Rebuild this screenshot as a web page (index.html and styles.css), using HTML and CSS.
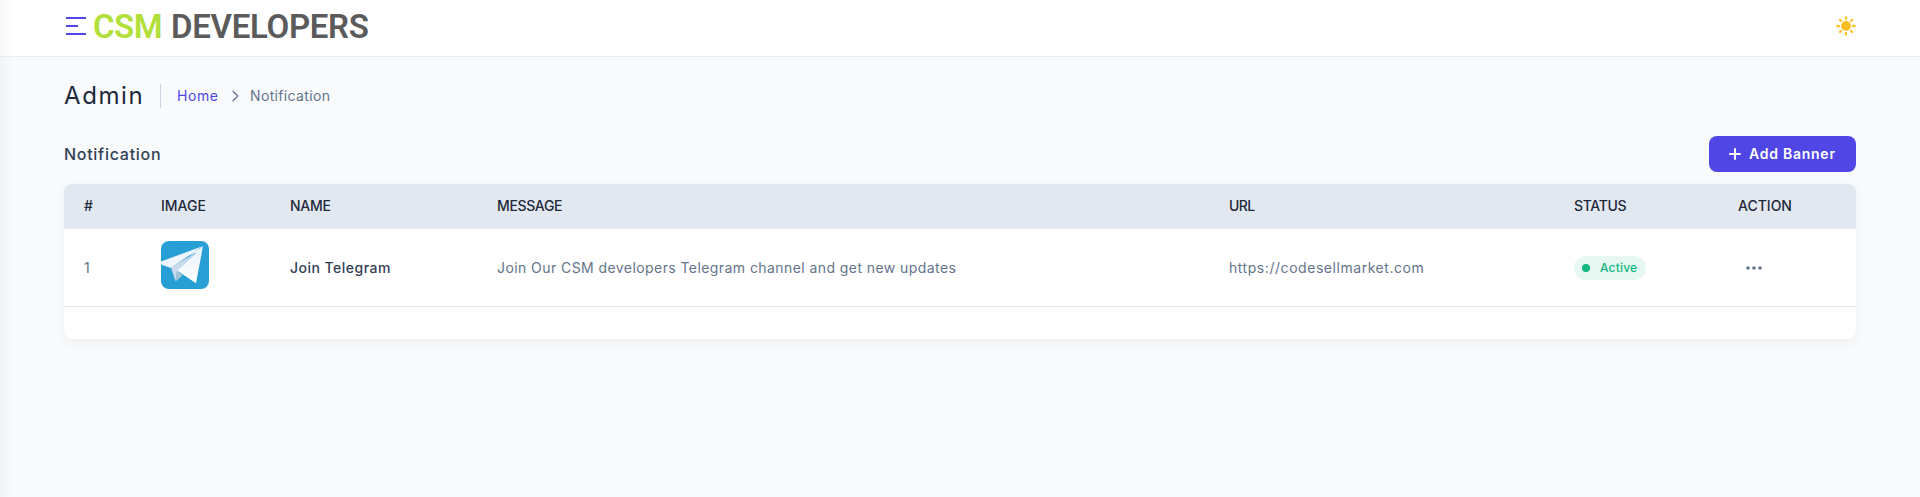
FILE: index.html
```html
<!DOCTYPE html>
<html lang="en">
<head>
<meta charset="utf-8">
<title>Notification</title>
<link rel="stylesheet" href="styles.css">
</head>
<body>
<div class="edge-shadow"></div>
<header class="topbar">
  <div class="brand">
    <div class="menu"><i></i><i class="short"></i><i></i></div>
    <div class="logo"><span class="lime">CSM</span> DEVELOPERS</div>
  </div>
  <svg class="sun" viewBox="0 0 20 20" fill="none" stroke="#fbbf24" stroke-width="2.3" stroke-linecap="round"><circle cx="10" cy="10" r="5" fill="#fbbf24" stroke="none"/><path d="M10 1.4v1.4M10 17.2v1.4M1.4 10h1.4M17.2 10h1.4M4 4l.9.9M15.1 15.1l.9.9M4 16l.9-.9M15.1 4.9l.9-.9"/></svg>
</header>
<main>
  <div class="heading">
    <h1><span class="t-admin">Admin</span></h1>
    <div class="divider"></div>
    <a class="home"><span class="t-home">Home</span></a>
    <svg class="chevron" viewBox="0 0 16 16" fill="none" stroke="#64748b" stroke-width="1.3" stroke-linecap="round" stroke-linejoin="round"><path d="M6 3.2L10.8 8 6 12.8"/></svg>
    <span class="crumb"><span class="t-crumb">Notification</span></span>
  </div>
  <div class="section">
    <h2><span class="t-section">Notification</span></h2>
    <button class="add"><svg viewBox="0 0 12 12" stroke="#fff" stroke-width="2" stroke-linecap="round"><path d="M6 1v10M1 6h10"/></svg><span class="t-add">Add Banner</span></button>
  </div>
  <div class="card">
    <div class="row head">
      <div><span class="t-hash">#</span></div><div><span class="t-image">IMAGE</span></div><div><span class="t-name">NAME</span></div><div><span class="t-message">MESSAGE</span></div><div><span class="t-url">URL</span></div><div><span class="t-status">STATUS</span></div><div><span class="t-action">ACTION</span></div>
    </div>
    <div class="row item">
      <div class="one">1</div>
      <div class="thumb-cell"><svg class="thumb" viewBox="0 0 48 48"><defs><linearGradient id="wing" x1="0" y1="0" x2="0" y2="1"><stop offset="0" stop-color="#e8f1fa"/><stop offset="1" stop-color="#fff"/></linearGradient></defs><rect width="48" height="48" fill="#279fd5"/><path d="M0 20.5L41.5 5.2 10 27 0 23.5z" fill="#eff5fc"/><path d="M10 26.5L35 11.5 16 30 14.5 40.5z" fill="#c8daec"/><path d="M14.5 40.5L16 29.5 21.5 34.5z" fill="#a9c6d8"/><path d="M42 5.2L35 42.2 16 29.5 35.5 11.5 27 15z" fill="url(#wing)"/></svg></div>
      <div class="title"><span class="t-title">Join Telegram</span></div>
      <div><span class="t-text">Join Our CSM developers Telegram channel and get new updates</span></div>
      <div><span class="t-link">https://codesellmarket.com</span></div>
      <div><span class="badge"><i></i><span class="t-active">Active</span></span></div>
      <div><svg class="dots" viewBox="0 0 16 4" fill="#64748b"><circle cx="2" cy="2" r="1.8"/><circle cx="8" cy="2" r="1.8"/><circle cx="14" cy="2" r="1.8"/></svg></div>
    </div>
  </div>
</main>
</body>
</html>
```
FILE: styles.css
```css
* { box-sizing: border-box; }
body { margin: 0; min-height: 497px; background: #f8fafc; color: #64748b; font: 400 14px/20px Inter, "Open Sans", sans-serif; }
h1, h2 { margin: 0; font-weight: 400; }
.edge-shadow { position: absolute; left: 0; top: 0; width: 12px; height: 497px; background: linear-gradient(90deg, rgba(48, 46, 56, .035), rgba(48, 46, 56, 0)); }
.topbar { display: flex; justify-content: space-between; align-items: center; height: 57px; padding: 0 64px 4px; background: #fff; border-bottom: 1px solid #e9edf3; }
.brand { display: flex; align-items: center; }
.menu { display: flex; flex-direction: column; gap: 6px; width: 20px; margin-left: 2px; }
.menu i { height: 2px; background: #4f46e5; }
.menu .short { width: 12px; }
.logo { margin-left: 7px; padding-top: 2px; font: 600 33px/40px Roboto, sans-serif; color: #5b5b5b; white-space: nowrap; letter-spacing: -.3px; word-spacing: 1px; }
.lime { color: #b2e03a; letter-spacing: -.5px; }
.sun { width: 20px; height: 20px; }
main { padding: 19px 64px 0; }
.heading { display: flex; align-items: center; height: 40px; }
h1 { width: 96px; font-size: 24px; line-height: 32px; color: #1e293b; }
.divider { width: 1px; height: 24px; background: #cbd5e1; }
.home { width: 50px; margin-left: 16px; color: #4f46e5; }
.chevron { width: 16px; height: 16px; }
.crumb { margin-left: 7px; }
.section { display: flex; justify-content: space-between; align-items: center; height: 36px; margin-top: 20px; }
h2 { font-size: 16px; font-weight: 500; color: #334155; }
.add { display: flex; align-items: center; width: 147px; height: 36px; padding: 0 0 0 20px; border: 0; border-radius: 8px; background: #4f46e5; color: #fff; font: 600 14px/20px Inter, sans-serif; white-space: nowrap; }
.add svg { width: 12px; height: 12px; margin-right: 8px; flex: none; }
.card { height: 155px; margin-top: 12px; background: #fff; border-radius: 8px; overflow: hidden; box-shadow: 0 3px 10px rgba(48, 46, 56, .06); }
.row { display: grid; grid-template-columns: 77px 129px 207px 732px 345px 164px 138px; align-items: center; white-space: nowrap; }
.row > div { padding-left: 20px; }
.head { height: 45px; padding-bottom: 2px; background: #e2e8f0; color: #1e293b; font-weight: 500; }
.item { height: 78px; border-bottom: 1px solid #e2e8f0; }
.thumb-cell { height: 48px; margin-top: -5px; }
.thumb { display: block; width: 48px; height: 48px; border-radius: 8px; }
.title { color: #334155; font-weight: 500; }
.badge { display: flex; align-items: center; width: 72px; height: 24px; padding-left: 8px; border-radius: 12px; background: #e7f8f2; color: #10b981; font-size: 12px; font-weight: 500; }
.badge i { width: 8px; height: 8px; margin-right: 10px; border-radius: 50%; background: #10b981; }
.dots { display: block; width: 16px; height: 4px; margin-left: 8px; }
.t-admin { letter-spacing: 1.6px; }
.t-home { letter-spacing: .6px; }
.t-crumb { letter-spacing: .35px; }
.t-section { letter-spacing: .72px; }
.t-add { letter-spacing: .75px; }
.t-name { letter-spacing: -.3px; }
.t-message { letter-spacing: -.35px; }
.t-url { letter-spacing: -.6px; }
.t-status { letter-spacing: -.35px; }
.t-title { letter-spacing: .48px; }
.t-text { letter-spacing: .425px; }
.t-link { letter-spacing: .55px; }
.t-active { letter-spacing: .2px; }
```
